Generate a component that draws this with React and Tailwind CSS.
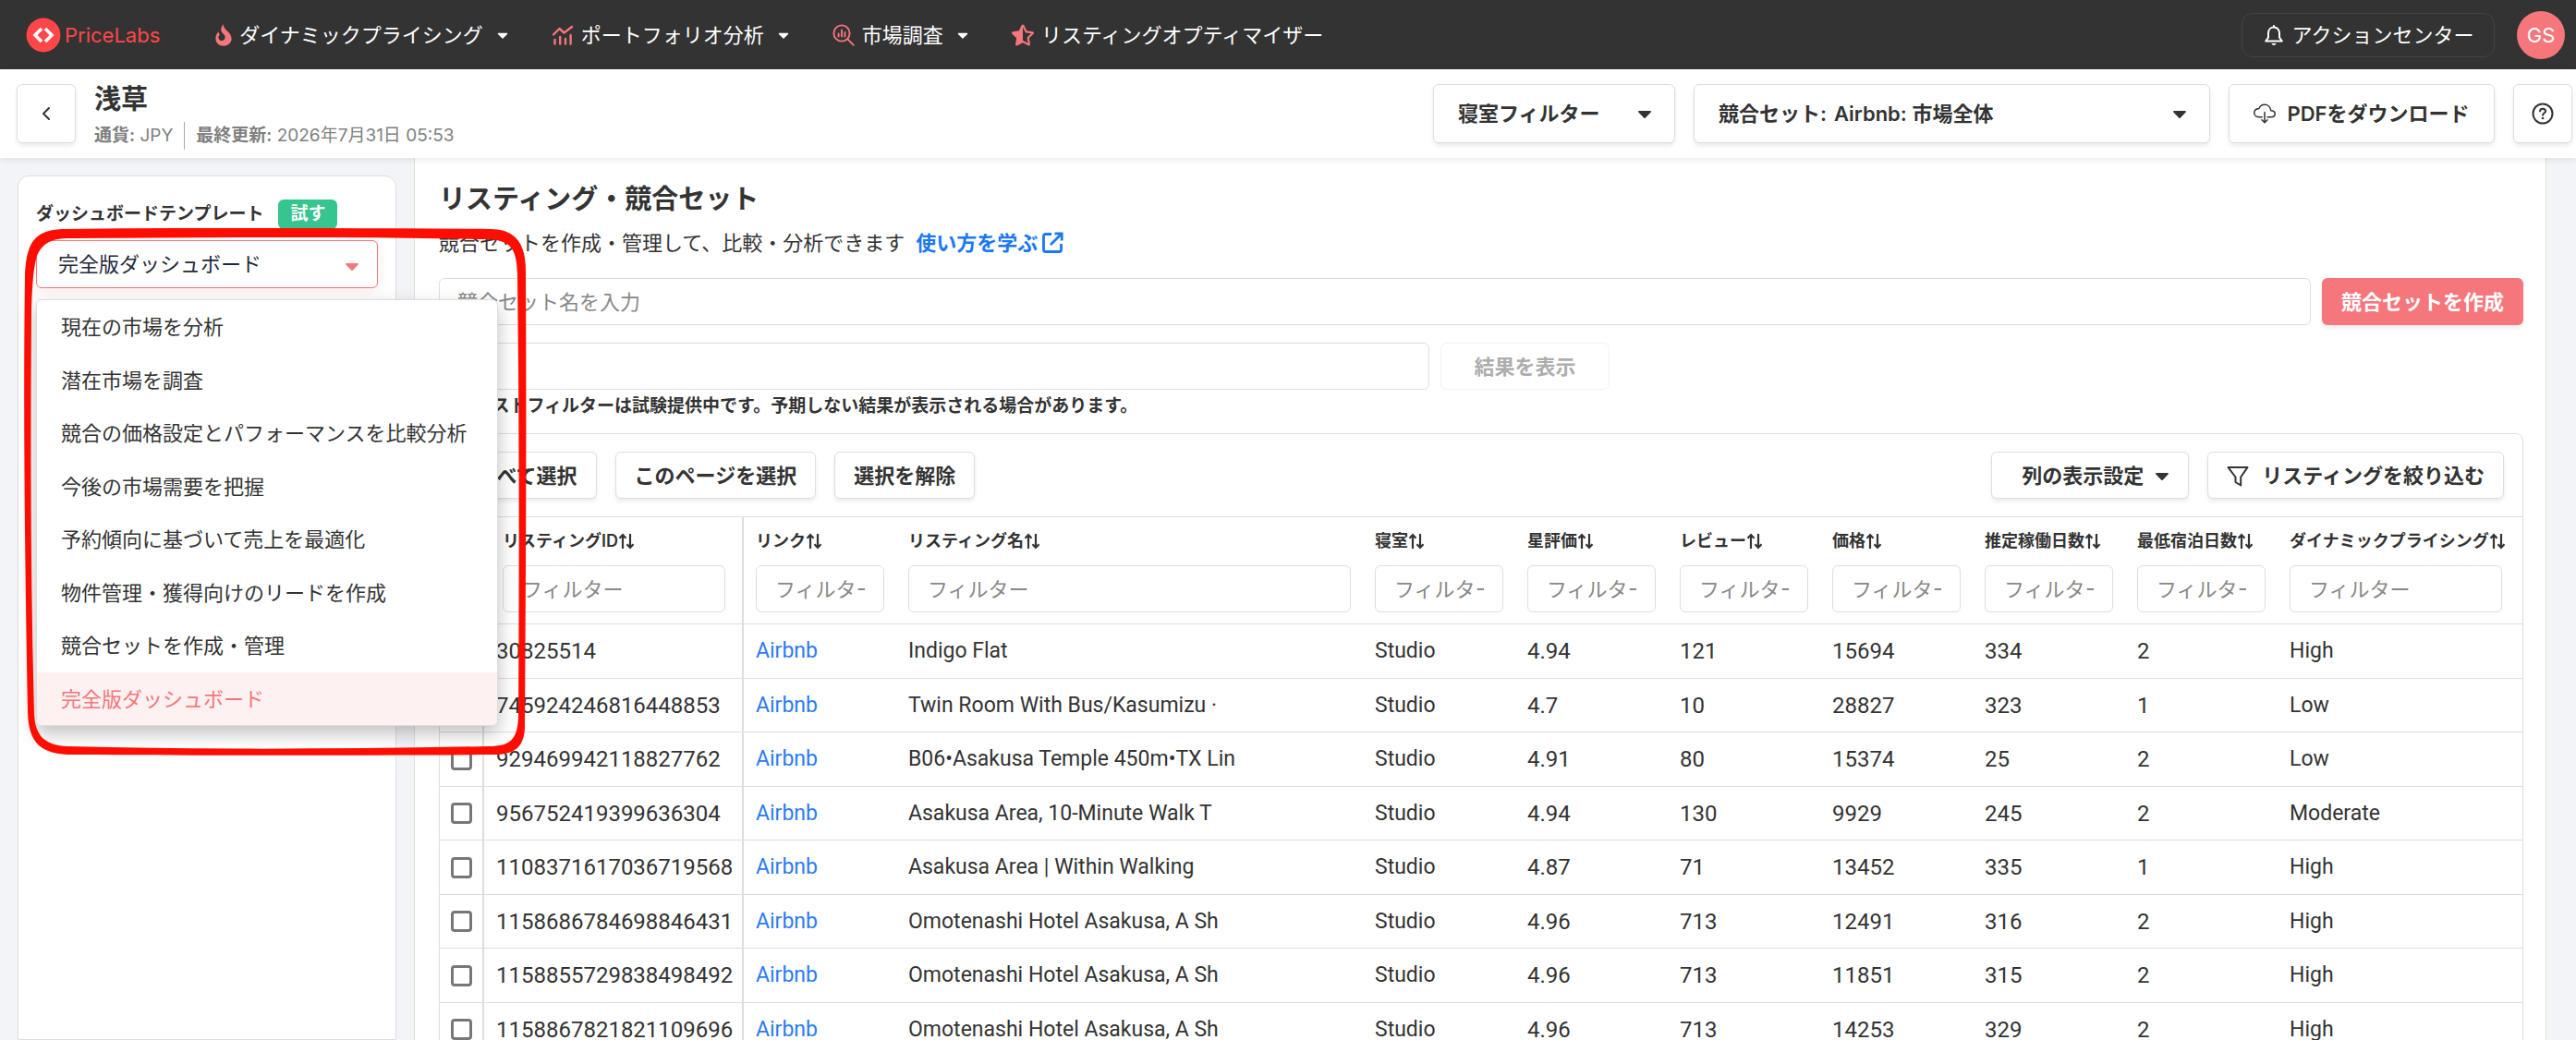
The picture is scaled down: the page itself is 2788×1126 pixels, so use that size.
import { useState } from "react";
import clsx from "clsx";
import { FaCaretDown, FaStarHalfAlt } from "react-icons/fa";
import { LuChevronLeft } from "react-icons/lu";
import { IoCloudDownloadOutline } from "react-icons/io5";

const navItems = [
    { label: "ダイナミックプライシング", icon: FlameIcon, caret: true },
    { label: "ポートフォリオ分析", icon: TrendIcon, caret: true },
    { label: "市場調査", icon: ResearchIcon, caret: true },
    { label: "リスティングオプティマイザー", icon: FaStarHalfAlt, caret: false },
];

const templates = [
    "現在の市場を分析",
    "潜在市場を調査",
    "競合の価格設定とパフォーマンスを比較分析",
    "今後の市場需要を把握",
    "予約傾向に基づいて売上を最適化",
    "物件管理・獲得向けのリードを作成",
    "競合セットを作成・管理",
    "完全版ダッシュボード",
];

const columns = [
    { key: "id", label: "リスティングID", width: "w-[281px]" },
    { key: "link", label: "リンク", width: "w-[165px]" },
    { key: "name", label: "リスティング名", width: "" },
    { key: "bedrooms", label: "寝室", width: "w-[165px]" },
    { key: "rating", label: "星評価", width: "w-[165px]" },
    { key: "reviews", label: "レビュー", width: "w-[165px]" },
    { key: "price", label: "価格", width: "w-[165px]" },
    { key: "occupied", label: "推定稼働日数", width: "w-[165px]" },
    { key: "minStay", label: "最低宿泊日数", width: "w-[165px]" },
    { key: "dynamic", label: "ダイナミックプライシング", width: "w-[265px]" },
];

const textColumns = ["link", "name", "bedrooms", "dynamic"];

const listings = [
    { id: "30825514", name: "Indigo Flat", rating: "4.94", reviews: 121, price: 15694, occupied: 334, minStay: 2, dynamic: "High" },
    { id: "745924246816448853", name: "Twin Room With Bus/Kasumizu ·", rating: "4.7", reviews: 10, price: 28827, occupied: 323, minStay: 1, dynamic: "Low" },
    { id: "929469942118827762", name: "B06•Asakusa Temple 450m•TX Lin", rating: "4.91", reviews: 80, price: 15374, occupied: 25, minStay: 2, dynamic: "Low" },
    { id: "956752419399636304", name: "Asakusa Area, 10-Minute Walk T", rating: "4.94", reviews: 130, price: 9929, occupied: 245, minStay: 2, dynamic: "Moderate" },
    { id: "1108371617036719568", name: "Asakusa Area | Within Walking", rating: "4.87", reviews: 71, price: 13452, occupied: 335, minStay: 1, dynamic: "High" },
    { id: "1158686784698846431", name: "Omotenashi Hotel Asakusa, A Sh", rating: "4.96", reviews: 713, price: 12491, occupied: 316, minStay: 2, dynamic: "High" },
    { id: "1158855729838498492", name: "Omotenashi Hotel Asakusa, A Sh", rating: "4.96", reviews: 713, price: 11851, occupied: 315, minStay: 2, dynamic: "High" },
    { id: "1158867821821109696", name: "Omotenashi Hotel Asakusa, A Sh", rating: "4.96", reviews: 713, price: 14253, occupied: 329, minStay: 2, dynamic: "High" },
];

const box = "rounded-md border border-[#dedede] bg-white";
const outlineButton = clsx(box, "flex items-center font-semibold shadow-[0_3px_4px_rgba(0,0,0,0.08)]");

function FlameIcon({ className }) {
    return (
        <svg viewBox="0 0 18 24" fill="currentColor" className={className}>
            <path d="M8.800.3c0 3.200 1.700 5 4.300 7.500 2.600 2.500 4.500 4.800 4.500 8.300 0 4.400-3.600 7.600-8.500 7.600-5 0-8.700-3.300-8.700-8 0-3.200 1.300-5.400 3.300-7.500 0 1.300.3 2.300 1.200 3-1.200 1.200-1.700 2.500-1.400 4 .4 1.900 2 3 3.900 2.800 2.200-.2 3.500-2 3.200-4.200-.2-1.500-1.200-2.600-2.600-3.800C5.500 7.800 5.700 3.700 8.800.3Z" />
        </svg>
    );
}

function TrendIcon({ className }) {
    return (
        <svg viewBox="0 0 24 24" fill="none" stroke="currentColor" strokeWidth="2.400" strokeLinecap="round" strokeLinejoin="round" className={className}>
            <path d="M2 11.500 8.500 5l5 4.500L22 3" />
            <path d="M3.500 17v4.500M9.200 14v7.500M15 16v5.500M20.600 12v9.500" />
        </svg>
    );
}

function ResearchIcon({ className }) {
    return (
        <svg viewBox="0 0 24 24" fill="none" stroke="currentColor" strokeWidth="1.900" strokeLinecap="round" className={className}>
            <circle cx="10" cy="10" r="8.600" />
            <path d="m16.200 16.200 6.600 6.600M6.600 10.500v3M10 6.500v7M13.400 9v4.500" />
        </svg>
    );
}

function BellIcon({ className }) {
    return (
        <svg viewBox="0 0 24 24" fill="none" stroke="currentColor" strokeWidth="2" strokeLinecap="round" strokeLinejoin="round" className={className}>
            <path d="M12 2v1.500M12 3.500c-3.600 0-6 2.800-6 6.200v4.800L3.200 18.500h17.600L18 14.500V9.700c0-3.400-2.400-6.200-6-6.200Z" />
            <path d="M9.500 21h5c-.3 1.300-1.300 2-2.500 2s-2.200-.7-2.500-2Z" fill="currentColor" stroke="none" />
        </svg>
    );
}

function ExternalIcon({ className }) {
    return (
        <svg viewBox="0 0 24 24" fill="none" stroke="currentColor" strokeWidth="2.800" className={className}>
            <path d="M11 2.500H4.500a2 2 0 0 0-2 2v15a2 2 0 0 0 2 2h15a2 2 0 0 0 2-2V13" />
            <path d="M14.500 1.800h7.700v7.700M22 2 10 14" />
        </svg>
    );
}

function HelpIcon({ className }) {
    return (
        <svg viewBox="0 0 24 24" fill="none" stroke="currentColor" strokeWidth="2" strokeLinecap="round" className={className}>
            <circle cx="12" cy="12" r="10.500" />
            <path d="M9 9.300c.2-1.600 1.400-2.500 3-2.500 1.700 0 3 1 3 2.600 0 2-3 2.300-3 4.300" />
            <circle cx="12" cy="17" r="1.300" fill="currentColor" stroke="none" />
        </svg>
    );
}

function FunnelIcon({ className }) {
    return (
        <svg viewBox="0 0 24 24" fill="none" stroke="currentColor" strokeWidth="2" strokeLinejoin="round" className={className}>
            <path d="M1.500 3h21l-7.300 10.500v9L9.500 19v-5.500Z" />
        </svg>
    );
}

function SortIcon() {
    return (
        <svg viewBox="0 0 18 18" fill="none" stroke="currentColor" strokeWidth="2.200" className="size-[18px] shrink-0">
            <path d="M5 17V2M1.500 5.800 5 2l3.500 3.800M13 1v15M9.500 12.200 13 16l3.500-3.800" />
        </svg>
    );
}

function TopNav() {
    return (
        <header className="flex h-[75px] items-center bg-[#333] pr-3 pl-7 text-white">
            <a href="#" className="mr-15 flex items-center gap-1 text-[#ff4648]">
                <svg viewBox="0 0 38 38" className="size-[38px]">
                    <circle cx="19" cy="19" r="18.500" fill="currentColor" />
                    <path d="m17 12-7 7 7 7M21 12l7 7-7 7" fill="none" stroke="#fff" strokeWidth="3.600" />
                </svg>
                <span className="text-[22px]">PriceLabs</span>
            </a>
            <nav className="flex items-center gap-11">
                {navItems.map(({ label, icon: Icon, caret }) => (
                    <a key={label} href="#" className="flex items-center gap-2">
                        <Icon className="h-6 w-auto text-[#f5767b]" />
                        {label}
                        {caret && <FaCaretDown className="ml-1 size-[18px]" />}
                    </a>
                ))}
            </nav>
            <button className="mr-6 ml-auto flex h-12 w-[274px] items-center justify-center gap-2 rounded-xl border border-[#444]">
                <BellIcon className="size-6" />
                アクションセンター
            </button>
            <button className="size-[52px] rounded-full bg-[#f5767b]">GS</button>
        </header>
    );
}

function SubHeader() {
    return (
        <div className="relative z-10 flex h-24 items-center bg-white pr-1 pl-[18px] shadow-[0_2px_8px_rgba(0,0,0,0.08)]">
            <button aria-label="戻る" className={clsx(outlineButton, "size-16 justify-center")}>
                <LuChevronLeft className="size-6" />
            </button>
            <div className="ml-5 pt-1.5">
                <h1 className="text-[29px] leading-[36px] font-semibold">浅草</h1>
                <div className="mt-1.5 flex items-center text-[19px] leading-[30px] text-[#808080]">
                    <span><b className="font-semibold">通貨:</b> JPY</span>
                    <span className="ml-3 border-l border-[#aaa] pl-3">
                        <b className="font-semibold">最終更新:</b> 2026年7月31日 05:53
                    </span>
                </div>
            </div>
            <div className="ml-auto flex gap-5">
                <div className={clsx(outlineButton, "relative h-16 w-[262px]")}>
                    <select aria-label="寝室フィルター" className="h-full w-full appearance-none pl-[26px]">
                        <option>寝室フィルター</option>
                    </select>
                    <FaCaretDown className="pointer-events-none absolute right-5 size-6" />
                </div>
                <div className={clsx(outlineButton, "relative h-16 w-[559px] pl-[26px]")}>
                    <label htmlFor="comp-set" className="shrink-0">競合セット:</label>
                    <select id="comp-set" className="h-full w-full appearance-none pl-2">
                        <option>Airbnb: 市場全体</option>
                    </select>
                    <FaCaretDown className="pointer-events-none absolute right-5 size-6" />
                </div>
                <button className={clsx(outlineButton, "h-16 w-[288px] justify-center gap-3")}>
                    <IoCloudDownloadOutline className="size-6" />
                    PDFをダウンロード
                </button>
                <button aria-label="ヘルプ" className={clsx(outlineButton, "size-16 justify-center")}>
                    <HelpIcon className="size-6" />
                </button>
            </div>
        </div>
    );
}

function Sidebar() {
    const [open, setOpen] = useState(true);
    const [template, setTemplate] = useState("完全版ダッシュボード");

    return (
        <aside className="w-[448px] shrink-0 px-[19px] pt-[19px]">
            <div className="h-full rounded-t-xl border border-[#dedede] bg-white px-[19px] pt-[25px]">
                <div className="flex items-center gap-4">
                    <label htmlFor="template" className="text-[19px] font-semibold">ダッシュボードテンプレート</label>
                    <span className="rounded-md bg-[#36c48f] px-[13px] text-[19px] leading-8 font-semibold text-white">試す</span>
                </div>
                <div className="relative mt-3">
                    <select
                        id="template"
                        value={template}
                        onMouseDown={(e) => {
                            e.preventDefault();
                            setOpen(!open);
                        }}
                        onChange={(e) => setTemplate(e.target.value)}
                        className="h-[52px] w-full appearance-none rounded-md border border-[#f5767b] bg-white pl-[23px] text-[#1f2a3a] shadow-[0_4px_12px_rgba(245,118,123,0.15)]">
                        {templates.map((name) => (
                            <option key={name}>{name}</option>
                        ))}
                    </select>
                    <FaCaretDown className="pointer-events-none absolute top-4 right-4 size-6 text-[#f5767b]" />
                    {open && (
                        <ul className="absolute top-[64px] left-0 z-30 w-[500px] overflow-hidden rounded-md border border-[#dedede] bg-white shadow-[0_8px_20px_rgba(0,0,0,0.25)]">
                            {templates.map((name) => (
                                <li key={name} className="odd:h-[58px] even:h-[57px]">
                                    <button
                                        onClick={() => {
                                            setTemplate(name);
                                            setOpen(false);
                                        }}
                                        className={clsx(
                                            "h-full w-full px-[26px] text-left whitespace-nowrap",
                                            name === template && "bg-[#fef1f1] text-[#f5767b]"
                                        )}>
                                        {name}
                                    </button>
                                </li>
                            ))}
                        </ul>
                    )}
                </div>
            </div>
        </aside>
    );
}

function ListingsTable() {
    return (
        <table className="w-full table-fixed border-separate border-spacing-0 text-left">
            <thead>
                <tr className="h-[117px]">
                    <th className="w-12 border-y border-r-2 border-[#dedede]" />
                    {columns.map(({ key, label, width }) => (
                        <th
                            key={key}
                            className={clsx(
                                "border-y border-[#dedede] align-top",
                                width,
                                key === "id" ? "border-r-2 pr-[18px] pl-5" : "pr-[13px] pl-[13px]"
                            )}>
                            <button className="mt-3 flex h-7 items-center text-[18px] font-semibold whitespace-nowrap">
                                {label}
                                <SortIcon />
                            </button>
                            <input
                                aria-label={label}
                                placeholder="フィルター"
                                className={clsx(
                                    box,
                                    "mt-3 h-[51px] w-full px-5 font-normal placeholder:text-[#888]",
                                    key === "dynamic" && "max-w-[230px]"
                                )}
                            />
                        </th>
                    ))}
                </tr>
            </thead>
            <tbody className="font-[Roboto,'Noto_Sans_CJK_JP',sans-serif]">
                {listings.map((row) => (
                    <tr key={row.id} className="odd:h-[59px] even:h-[58px]">
                        <td className="border-r-2 border-b border-[#dedede] pl-3">
                            <input
                                type="checkbox"
                                aria-label={row.id}
                                className="block size-[23px] appearance-none rounded-sm border-3 border-[#777] bg-white"
                            />
                        </td>
                        {columns.map(({ key }) => (
                            <td
                                key={key}
                                className={clsx(
                                    "border-b border-[#dedede] pl-[13px] whitespace-nowrap",
                                    textColumns.includes(key) ? "text-[23px]" : "text-[24px]",
                                    key === "id" && "border-r-2"
                                )}>
                                {key === "link" ? (
                                    <a href="#" className="text-[#2b7bf3]">Airbnb</a>
                                ) : key === "bedrooms" ? (
                                    "Studio"
                                ) : (
                                    row[key]
                                )}
                            </td>
                        ))}
                    </tr>
                ))}
            </tbody>
        </table>
    );
}

function Listings() {
    return (
        <main className="mr-8 min-w-0 flex-1 border-x border-[#dedede] bg-white pt-[25px] pr-6 pl-[26px]">
            <h2 className="text-[29px] leading-10 font-semibold">リスティング・競合セット</h2>
            <p className="mt-2 flex items-center leading-[38px]">
                競合セットを作成・管理して、比較・分析できます
                <a href="#" className="ml-3 flex items-center gap-1 font-bold text-[#1b78f5]">
                    使い方を学ぶ
                    <ExternalIcon className="size-6" />
                </a>
            </p>
            <div className="mt-[19px] flex gap-3">
                <input
                    aria-label="競合セット名"
                    placeholder="競合セット名を入力"
                    className={clsx(box, "h-[51px] min-w-0 flex-1 px-[19px] placeholder:text-[#888]")}
                />
                <button className="h-[51px] rounded-md bg-[#f5767b] px-[21px] font-semibold text-white shadow-[0_3px_4px_rgba(0,0,0,0.08)]">
                    競合セットを作成
                </button>
            </div>
            <div className="mt-[19px] flex gap-3">
                <input id="text-filter" aria-label="テキストフィルター" className={clsx(box, "h-[51px] w-[1072px] px-[19px]")} />
                <button disabled className="h-[51px] w-[183px] rounded-md border border-[#f2f2f2] font-semibold text-[#adadad]">
                    結果を表示
                </button>
            </div>
            <label htmlFor="text-filter" className="mt-1 block pl-5 text-[19px] leading-7 font-semibold">
                テキストフィルターは試験提供中です。予期しない結果が表示される場合があります。
            </label>
            <section className="mt-[15px] rounded-t-lg border border-[#dedede]">
                <div className="flex items-center gap-5 px-5 py-[19px]">
                    <button className={clsx(outlineButton, "h-[51px] px-5")}>すべて選択</button>
                    <button className={clsx(outlineButton, "h-[51px] px-5")}>このページを選択</button>
                    <button className={clsx(outlineButton, "h-[51px] px-5")}>選択を解除</button>
                    <button className={clsx(outlineButton, "ml-auto h-[51px] w-[214px] justify-end gap-2 pr-4")}>
                        列の表示設定
                        <FaCaretDown className="size-6" />
                    </button>
                    <button className={clsx(outlineButton, "h-[51px] gap-3.5 px-5")}>
                        <FunnelIcon className="size-6" />
                        リスティングを絞り込む
                    </button>
                </div>
                <ListingsTable />
            </section>
        </main>
    );
}

function Highlight() {
    return (
        <svg viewBox="0 0 544 572" fill="#ff0d00" fillRule="evenodd" className="pointer-events-none absolute top-[247px] left-[26px] z-50 w-[544px]">
            <path d="M1 50C3 14 12 1 46 1 200-1 360 0 505 1c27 0 38 16 38 45 1 180 0 340-1 495-1 22-12 29-34 29-160 1-320 1-450 0C20 571 5 560 4 524 1 360-1 210 1 50ZM14 30C10 44 9 60 8 90c-1 150-1 290 3 436 1 24 12 34 36 35 150 4 300 3 456 0 24 0 31-8 32-32 1-160 1-320-1-479-1-30-8-37-34-38-145-3-300-2-450-1-20 0-30 5-36 19Z" />
        </svg>
    );
}

export default function App() {
    return (
        <div className="relative flex h-screen flex-col overflow-hidden bg-[#f2f4f7] font-[Inter,'Noto_Sans_CJK_JP',sans-serif] text-[22px] leading-8 text-[#333]" lang="ja">
            <TopNav />
            <SubHeader />
            <div className="flex min-h-0 flex-1">
                <Sidebar />
                <Listings />
            </div>
            <Highlight />
        </div>
    );
}
